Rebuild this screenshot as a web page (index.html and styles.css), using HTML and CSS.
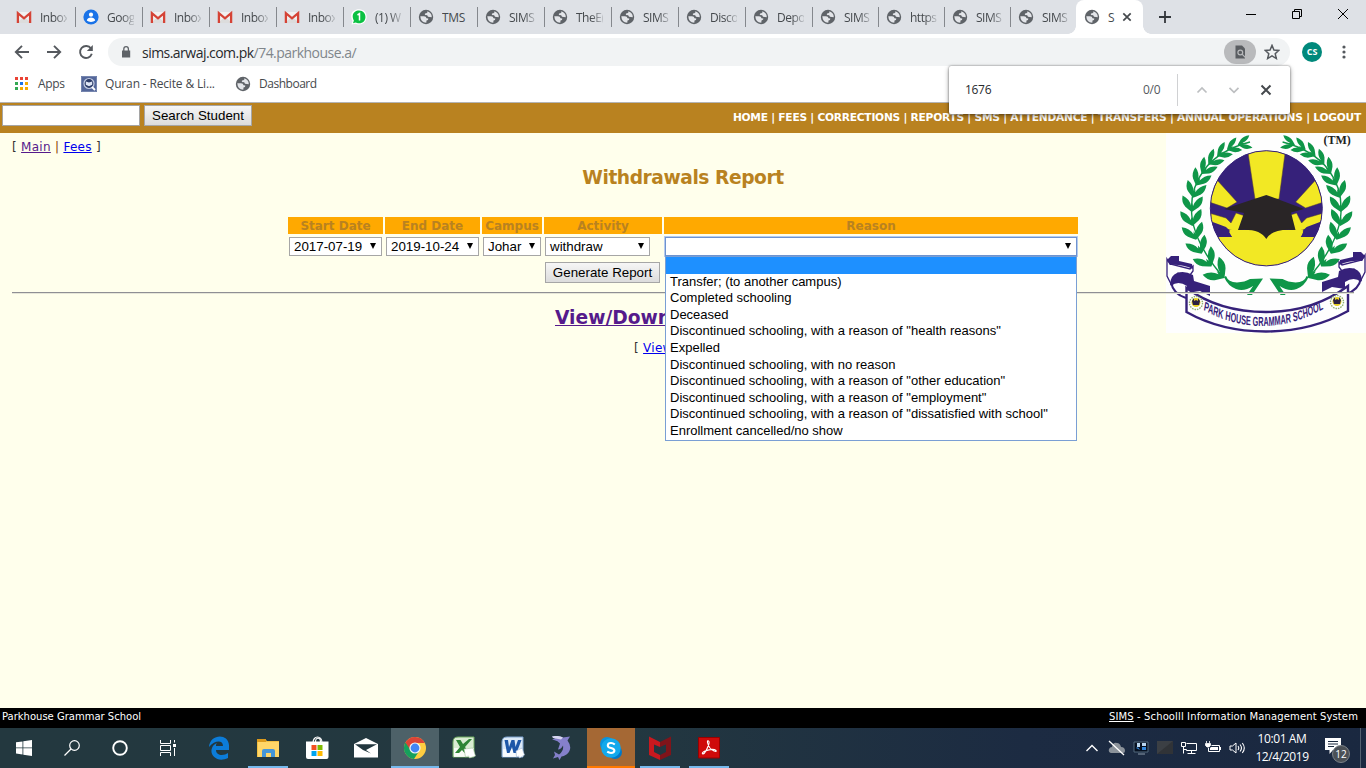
FILE: index.html
```html
<!DOCTYPE html>
<html lang="en">
<head>
<meta charset="utf-8">
<title>SIMS</title>
<link rel="stylesheet" href="styles.css">
</head>
<body>
<svg class="defs" width="0" height="0">
  <symbol id="globe" viewBox="0 0 16 16"><circle cx="8" cy="8" r="7.200" fill="#5f6368"/><path d="M2.300 7.300 6 7.200Q8.300 7.300 8.500 9.300L10.300 9.400Q10.600 11.300 8.500 11.400L8.300 13.700Q2.600 13.500 2.300 7.300zM9.300 2.300Q10 3.800 8.300 4.200 6.500 4.200 6.800 5.600 7 6.300 9 6.100L10 7.700 13.800 8.200Q13.800 3.700 9.300 2.300z" fill="#e3e5e9"/></symbol>
  <symbol id="gmail" viewBox="0 0 16 16"><path d="M1 3h14v11H1z" fill="#f1f1f1"/><path d="M1 14 8 7.500 15 14z" fill="#dcdcdc"/><path d="M1.900 14V4.200L8 9.300l6.100-5.100V14" fill="none" stroke="#d54336" stroke-width="2.300"/></symbol>
  <symbol id="leaf" viewBox="-12 -18 24 24" overflow="visible"><path d="M0 4Q-3 2-7-1Q-11.500-5-10.500-12Q-3-9-1-2L0-5L1-2Q3-9 10.500-12Q11.500-5 7-1Q3 2 0 4z" fill="#0f9648"/></symbol>
</svg>

<header class="tabs">
  <div class="tab"><svg><use href="#gmail"/></svg><span>Inbox</span></div>
  <div class="tab"><svg viewBox="0 0 16 16"><circle cx="8" cy="8" r="7.600" fill="#1a73e8"/><circle cx="8" cy="5.700" r="2.100" fill="#fff"/><path d="M3.800 11.500c.5-4 7.900-4 8.400 0-2 1.900-6.400 1.900-8.400 0z" fill="#fff"/></svg><span>Goog</span></div>
  <div class="tab"><svg><use href="#gmail"/></svg><span>Inbox</span></div>
  <div class="tab"><svg><use href="#gmail"/></svg><span>Inbox</span></div>
  <div class="tab"><svg><use href="#gmail"/></svg><span>Inbox</span></div>
  <div class="tab"><svg viewBox="0 0 16 16"><path d="M.5 15.500 1.500 12C-2.500 4 3 .3 8 .3c10.500 0 10 15.200 0 15.200-1.500 0-2.500-.3-3.500-.8z" fill="#fff"/><path d="M2 14.200 2.900 11.600C-.5 5 4 1.500 8 1.500c8.600 0 8.600 12.800 0 12.800-1.500 0-2.500-.5-3.300-.9z" fill="#0cc143"/><path d="m6.500 6 2-1.300V11.500" stroke="#fff" stroke-width="1.500" fill="none"/></svg><span>(1) W</span></div>
  <div class="tab"><svg><use href="#globe"/></svg><span class="full">TMS</span></div>
  <div class="tab"><svg><use href="#globe"/></svg><span>SIMS</span></div>
  <div class="tab"><svg><use href="#globe"/></svg><span>TheE(</span></div>
  <div class="tab"><svg><use href="#globe"/></svg><span>SIMS</span></div>
  <div class="tab"><svg><use href="#globe"/></svg><span>Disco</span></div>
  <div class="tab"><svg><use href="#globe"/></svg><span>Depo</span></div>
  <div class="tab slim"><svg><use href="#globe"/></svg><span>SIMS</span></div>
  <div class="tab slim"><svg><use href="#globe"/></svg><span>https</span></div>
  <div class="tab slim"><svg><use href="#globe"/></svg><span>SIMS</span></div>
  <div class="tab slim last"><svg><use href="#globe"/></svg><span>SIMS</span></div>
  <div class="tab active"><svg><use href="#globe"/></svg><span>S</span><svg class="x" viewBox="0 0 10 10"><path d="m1.300 1.300 7.400 7.400m0-7.400L1.300 8.700" stroke="#45494d" stroke-width="1.700"/></svg></div>
  <svg class="plus" viewBox="0 0 12 12"><path d="M6 0v12M0 6h12" stroke="#33373b" stroke-width="1.800"/></svg>
  <div class="winctl">
    <svg viewBox="0 0 12 12"><path d="M1 6.500h10" stroke="#000"/></svg>
    <svg viewBox="0 0 12 12"><path d="M1.500 3.500h7v7h-7zM3.500 3.500v-2h7v7h-2" fill="none" stroke="#000"/></svg>
    <svg viewBox="0 0 12 12"><path d="m1 1 10 10M11 1 1 11" stroke="#000"/></svg>
  </div>
</header>

<div class="toolbar">
  <svg class="nv" viewBox="0 0 16 16"><path d="M15 8H2M8 1.800 1.800 8 8 14.200" fill="none" stroke="#55595e" stroke-width="1.900"/></svg>
  <svg class="nv" viewBox="0 0 16 16"><path d="M1 8h13M8 1.800 14.200 8 8 14.200" fill="none" stroke="#55595e" stroke-width="1.900"/></svg>
  <svg class="nv" viewBox="0 0 16 16"><path d="M13 4.500A6 6 0 1 0 13.800 9.800" fill="none" stroke="#55595e" stroke-width="1.900"/><path d="M14.800 1v6h-6z" fill="#55595e"/></svg>
  <div class="omni">
    <svg class="lock" viewBox="0 0 10 12"><path d="M1 4.500h8.200V11.500H1z" fill="#5f6368"/><path d="M2.800 5V3a2.300 2.300 0 0 1 4.600 0v2" fill="none" stroke="#5f6368" stroke-width="1.300"/></svg>
    <span class="url">sims.arwaj.com.pk<i>/74.parkhouse.a/</i></span>
    <span class="findpill"><svg viewBox="0 0 12 14"><path d="M1.500.5H8L11 3.500V13.500H1.500z" fill="#5a5d61"/><circle cx="6.300" cy="7.500" r="2.400" fill="none" stroke="#b9babc" stroke-width="1.200"/><path d="m8 9.200 3.500 3.500" stroke="#b9babc" stroke-width="1.200"/></svg></span>
    <svg class="star" viewBox="0 0 14 14"><path d="m7 1.200 1.700 4 4.300.4-3.200 2.900 1 4.200L7 10.400l-3.800 2.300 1-4.200L1 5.600l4.300-.4z" fill="none" stroke="#55595e" stroke-width="1.300"/></svg>
  </div>
  <span class="avatar">CS</span>
  <svg class="dots" viewBox="0 0 4 14"><circle cx="2" cy="2" r="1.600"/><circle cx="2" cy="7" r="1.600"/><circle cx="2" cy="12" r="1.600"/></svg>
</div>

<div class="bookmarks">
  <svg class="apps" viewBox="0 0 13 13"><path d="M0 0h3v3H0zM5 0h3v3H5zM10 0h3v3h-3z" fill="#ea4335"/><path d="M0 5h3v3H0zM0 10h3v3H0z" fill="#34a853"/><path d="M5 5h3v3H5z" fill="#1a73e8"/><path d="M10 5h3v3h-3zM5 10h3v3H5zM10 10h3v3h-3z" fill="#f5ab00"/></svg>
  <span class="b1">Apps</span>
  <svg class="bi" viewBox="0 0 16 16"><path d="M0 0h16v16H0z" fill="#54679a"/><path d="M.5.5h15v15H.5z" fill="none" stroke="#7585ae"/><circle cx="8" cy="7.500" r="5" fill="#2c3c68" stroke="#c4cde2" stroke-width="1.200"/><path d="m4.800 5.500 3.200 1 3.200-1v3.200L8 10.300 4.800 8.700z" fill="#dfe6f5"/><path d="m11 11 3 3" stroke="#fff" stroke-width="1.800"/></svg>
  <span class="b2">Quran - Recite &amp; Li...</span>
  <svg class="bi"><use href="#globe"/></svg>
  <span class="b3">Dashboard</span>
</div>

<div class="findbar"><span>1676</span><span class="count">0/0</span><i></i>
  <svg viewBox="0 0 12 12"><path d="m1.500 8.500 4.500-4.500 4.500 4.500" fill="none" stroke="#bdbfc1" stroke-width="1.700"/></svg>
  <svg viewBox="0 0 12 12"><path d="m1.500 3.800 4.500 4.500 4.500-4.500" fill="none" stroke="#bdbfc1" stroke-width="1.700"/></svg>
  <svg viewBox="0 0 12 12"><path d="m1.500 1.500 9 9m0-9-9 9" stroke="#45494d" stroke-width="2"/></svg>
</div>

<nav class="sitenav">
  <span class="field"></span><span class="btn search">Search Student</span>
  <span class="links">HOME | FEES | CORRECTIONS | REPORTS | SMS | ATTENDANCE | TRANSFERS | ANNUAL OPERATIONS | LOGOUT</span>
</nav>

<main class="page">
  <svg class="logo" viewBox="0 0 200 200">
    <path d="M0 0h200v200H0z" fill="#fefefe"/>
    <clipPath id="disc"><ellipse cx="100.300" cy="75.300" rx="56" ry="57.600"/></clipPath>
    <g clip-path="url(#disc)">
      <path d="M40 10h120v130H40z" fill="#36217a"/>
      <g fill="#f2e824" stroke="#57442c" stroke-width=".5">
        <path d="M81 13H120L113 66H89z"/>
        <path d="M51 47 71 69 61 75 43 69zM149.600 47 129.600 69 139.600 75 157.600 69z"/>
        <path d="M43 80 60 85 65 90 70 80 79 83 72 99 64 97 44 91zM157.600 80 140.600 85 135.600 90 130.600 80 121.600 83 128.600 99 136.600 97 156.600 91z"/>
        <path d="M40 103 66 104 62 97H138L135 104 160 103V140H40z" stroke="none"/>
      </g>
      <path d="M44 88 60 94 64 98 62 100 66 104 48 104zM156.600 88 140.600 94 136.600 98 138.600 100 134.600 104 152.600 104z" fill="#36217a"/>
    </g>
    <ellipse cx="100.300" cy="75.300" rx="56" ry="57.600" fill="none" stroke="#36217a" stroke-width="1"/>
    <path d="M58 76 100.300 62 138 76 125 79.500 129.500 97Q106 95 100.300 106Q94 95 72 97L78 80z" fill="#292526"/>
    <g id="branch">
      <path d="M84 9Q53 17 38 37T26 84T57 144" fill="none" stroke="#0f9648" stroke-width="1.400"/>
      <use href="#leaf" x="-12" y="-18" width="24" height="24" transform="translate(75 11) rotate(76) scale(.62 .85)"/>
      <use href="#leaf" x="-12" y="-18" width="24" height="24" transform="translate(64 15) rotate(65) scale(.66 .85)"/>
      <use href="#leaf" x="-12" y="-18" width="24" height="24" transform="translate(54 21) rotate(56) scale(.7 .88)"/>
      <use href="#leaf" x="-12" y="-18" width="24" height="24" transform="translate(45 29) rotate(47) scale(.75 .92)"/>
      <use href="#leaf" x="-12" y="-18" width="24" height="24" transform="translate(38 38) rotate(37) scale(.8 .96)"/>
      <use href="#leaf" x="-12" y="-18" width="24" height="24" transform="translate(32 49) rotate(27) scale(.86 1)"/>
      <use href="#leaf" x="-12" y="-18" width="24" height="24" transform="translate(28 61) rotate(15) scale(.92 1)"/>
      <use href="#leaf" x="-12" y="-18" width="24" height="24" transform="translate(26 75) rotate(3) scale(.96 1)"/>
      <use href="#leaf" x="-12" y="-18" width="24" height="24" transform="translate(26 89) rotate(-6)"/>
      <use href="#leaf" x="-12" y="-18" width="24" height="24" transform="translate(29 103) rotate(-15)"/>
      <use href="#leaf" x="-12" y="-18" width="24" height="24" transform="translate(34 117) rotate(-25)"/>
      <use href="#leaf" x="-12" y="-18" width="24" height="24" transform="translate(43 130) rotate(-35) scale(1.050)"/>
      <use href="#leaf" x="-12" y="-18" width="24" height="24" transform="translate(55 142) rotate(-48) scale(1.150)"/>
      <path d="M60 143Q62 149 71 149.500Q79 149 84 146L97 145.500 86 162H81L87 153Q78 159 70 156Q62 153 58 144z" fill="#0f9648"/>
    </g>
    <use href="#branch" transform="translate(200.600 0) scale(-1 1)"/>
    <g id="fold">
      <path d="M5 149Q7 161 20 165" fill="none" stroke="#36217a" stroke-width="2"/>
      <path d="M1 126 4 131 24 136 27 133V138L24 142V146L12 140 5 151 1 143z" fill="#fefefe" stroke="#36217a" stroke-width="1.300"/>
      <path d="M1 127 5 123 13 123 13 128 26 131 27 136Q15 131 4 132zM4 151Q5 142 11 140Q18 137 27 142L28 148 44 153V163L34 158 21 160V153Q12 147 5 153z" fill="#36217a"/>
    </g>
    <use href="#fold" transform="translate(200 -4) scale(-1 1)"/>
    <path d="M20.500 155Q53 179 100 179T182 153V178Q145 198.500 100 198.500T20.500 179z" fill="#fefefe" stroke="#36217a" stroke-width="2.400"/>
    <g id="mini"><circle cx="30" cy="170" r="6.500" fill="#fff" stroke="#8fae6e" stroke-width="1.400" stroke-dasharray="1.500 1"/><circle cx="30" cy="169.500" r="4.500" fill="#e5cf25"/><path d="M26 168l2-3v3l2-1 2 1v-3l2 3-1 4h-6z" fill="#2b2040"/></g>
    <use href="#mini" x="141" y="-1"/>
    <path id="arc" d="M67 177Q178 211 290 173" fill="none"/>
    <g transform="scale(.56 1)"><text class="motto"><textPath href="#arc">PARK HOUSE GRAMMAR SCHOOL</textPath></text></g>
    <text class="tm" x="157.500" y="11">(TM)</text>
  </svg>

  <div class="crumbs">[ <a class="seen">Main</a> <b>|</b> <a>Fees</a> ]</div>
  <h1>Withdrawals Report</h1>

  <div class="grid">
    <div class="th">Start Date</div><div class="th">End Date</div><div class="th">Campus</div><div class="th">Activity</div><div class="th">Reason</div>
    <div class="sel">2017-07-19<i></i></div>
    <div class="sel">2019-10-24<i></i></div>
    <div class="sel">Johar<i></i></div>
    <div class="sel act">withdraw<i></i></div>
    <div class="sel open"><i></i>
      <ul class="menu">
        <li class="hi"></li>
        <li>Transfer; (to another campus)</li>
        <li>Completed schooling</li>
        <li>Deceased</li>
        <li>Discontinued schooling, with a reason of "health reasons"</li>
        <li>Expelled</li>
        <li>Discontinued schooling, with no reason</li>
        <li>Discontinued schooling, with a reason of "other education"</li>
        <li>Discontinued schooling, with a reason of "employment"</li>
        <li>Discontinued schooling, with a reason of "dissatisfied with school"</li>
        <li>Enrollment cancelled/no show</li>
      </ul>
    </div>
    <span class="btn gen">Generate Report</span>
  </div>
  <hr>
  <h2><a class="seen">View/Down</a></h2>
  <div class="viewrow">[ <a>View</a></div>
</main>

<footer class="foot"><span>Parkhouse Grammar School</span><span class="sys"><u>SIMS</u> - Schoolll Information Management System</span></footer>

<div class="taskbar">
  <div class="ti"><svg viewBox="0 0 16 16"><path d="M0 2.300 6.500 1.400V7.500H0zM7.300 1.300 16 0v7.500H7.300zM0 8.300h6.500v6.200L0 13.600zM7.300 8.300H16V16L7.300 14.700z" fill="#fff"/></svg></div>
  <div class="ti"><svg viewBox="0 0 16 16"><circle cx="10.500" cy="5.500" r="4.800" fill="none" stroke="#fff" stroke-width="1.200"/><path d="M7 9 .5 15.500" stroke="#fff" stroke-width="1.300"/></svg></div>
  <div class="ti"><svg viewBox="0 0 16 16"><circle cx="8" cy="8" r="6.800" fill="none" stroke="#fff" stroke-width="1.900"/></svg></div>
  <div class="ti"><svg viewBox="0 0 16 16"><path d="M.5 0v3.500h10V0M.5 16v-3.500h10V16M.5 5.500h10v5H.5zM14.500 0v2.500M14.500 8v8" fill="none" stroke="#fff"/><path d="M13 4h3v3h-3z" fill="#fff"/></svg></div>
  <div class="sp"></div>
  <div class="ti big"><svg viewBox="0 0 24 24"><path d="M2 11C3-2 21-3 22 9v5H9c0 6 8 6 12 3v5C11 27 2 20 5 12c1-3 3-4 5-5-1 1-1 2-1 3h7C16 4 8 4 2 11z" fill="#0c7cd8"/></svg></div>
  <div class="ti big run"><svg viewBox="0 0 24 24"><path d="M1 3h8l2 2h12v16H1z" fill="#f2bf42"/><path d="M1 3h9v3H1z" fill="#dc9a1c"/><path d="M2 6h21v15H2z" fill="#ffd668"/><path d="M6 21v-6q0-2 2-2h9q2 0 2 2v6h-4v-4h-5v4z" fill="#4596d8"/></svg></div>
  <div class="ti big"><svg viewBox="0 0 24 24"><path d="M8 7C8-1 17-1 17 7M10.500 6c0-5 5-5 5 0" fill="none" stroke="#fff" stroke-width="1.200"/><path d="M1 5.500h22.500V21q0 2-2 2H3q-2 0-2-2z" fill="#fff"/><path d="M6.500 9h5v5h-5z" fill="#f25022"/><path d="M12.500 9h5v5h-5z" fill="#7fba00"/><path d="M6.500 15h5v5h-5z" fill="#00a4ef"/><path d="M12.500 15h5v5h-5z" fill="#ffb900"/></svg></div>
  <div class="ti big"><svg viewBox="0 0 24 24"><path d="M0 8 12 2 24 8V21.500H0z" fill="#fff"/><path d="M1 8.300h22L12 14l5 3.500L9 14z" fill="#23373f"/></svg></div>
  <div class="ti big cur"><svg viewBox="0 0 24 24"><circle cx="12" cy="12" r="11" fill="#ffcd40"/><path d="M12 12 2.400 6.500A11 11 0 0 0 11 23l5.500-8.500z" fill="#16a05d"/><path d="M12 7h9.800A11 11 0 0 0 2.400 6.500L7.500 14z" fill="#db4437"/><circle cx="12" cy="12" r="5.600" fill="#f3f3f3"/><circle cx="12" cy="12" r="4.400" fill="#4285f4"/></svg></div>
  <div class="ti big"><svg viewBox="0 0 24 24"><path d="M6 1h16v20H1V6q0-5 5-5z" fill="#d9ecd2" stroke="#6faa60"/><path d="M2 12h20v9H2z" fill="#fff" opacity=".8"/><path d="M4 4h4.500L11 8l6-5h3l-7 8 4 6h-4.500L10 14l-3 3H3l5-6z" fill="#2d8534"/><path d="m12 13 9-1 2.500 8-6 2-1-2-3 1z" fill="#fff" stroke="#9dbf97" stroke-width=".6"/></svg></div>
  <div class="ti big"><svg viewBox="0 0 24 24"><path d="M6 1h16v20H1V6q0-5 5-5z" fill="#dce9f7" stroke="#7ea3d0"/><path d="M2 13h20v8H2z" fill="#fff" opacity=".8"/><path d="M3.500 4h3.500l1 7 2.500-7h3l1 7 2.500-7h3.500l-5 13h-3l-1.500-6-2.500 6H6z" fill="#1e57a8"/><path d="m15 15 6-3 2.500 7-5 3-1-2-2 1z" fill="#fff" stroke="#9cb3d1" stroke-width=".6"/></svg></div>
  <div class="ti big"><svg viewBox="0 0 24 24"><path d="M2 .5q6-1.500 11 1l7-1-2.500 4q6 8-1 14-3 2-5 2l-2 3.500-1.500-3-5 1.500 2-3.500-1-3.500 5 3q5-4 4-9-2 4-5 4l2-6q-2-3-6-3.500L2 3.500l3-1z" fill="#8580cb"/><path d="M2 .5q6-1.500 11 1l-2 2-8-1.500z" fill="#d8d7f0"/></svg></div>
  <div class="ti big alert"><svg viewBox="0 0 24 24"><circle cx="8" cy="8" r="7" fill="#0a93dc"/><circle cx="16" cy="16" r="7" fill="#0078c8"/><circle cx="12" cy="12" r="9.800" fill="#12a9ec"/><path d="M15.800 8.500Q14 7 12 7 8.800 7 8.800 9.400 8.800 11.300 12 12t3.400 2.600Q15.400 17 12 17 10 17 8.200 15.700" fill="none" stroke="#fff" stroke-width="2.100"/></svg></div>
  <div class="ti big run"><svg viewBox="0 0 24 24"><path d="m1 .5 11 5.500v5L6 8.500V16l6 3v5L1 19z" fill="#c8191f"/><path d="M23 .5 12 6v5l6-2.500V16l-6 3v5l11-5z" fill="#80141a"/></svg></div>
  <div class="ti big run"><svg viewBox="0 0 24 24"><path d="M1.500 1.500h21v20.500h-21z" fill="#cf0a0a" stroke="#990000"/><path d="M11.500 5q-1.300-1-1 1.500Q12 13 17 15q3 1 2-.5-3-2.500-11 .5-4 2-2 3Q9 17 12 7.500q.5-2-.5-2.500z" fill="none" stroke="#fff" stroke-width="1.100"/></svg></div>
  <div class="tray">
    <svg class="t1" viewBox="0 0 14 14"><path d="m1.500 10 5.500-5.500 5.500 5.500" fill="none" stroke="#fff" stroke-width="1.400"/></svg>
    <svg class="t2" viewBox="0 0 18 16"><path d="M3 13q-3-1-2-4 1-2 3-2Q5 2 9 3q3 0 4 4 4 0 4 4 0 2-2 2z" fill="#8b929a"/><path d="m1 1 15 14" stroke="#fff" stroke-width="1.300"/></svg>
    <svg class="t3" viewBox="0 0 16 16"><path d="M1 2h14v10H1z" fill="#061020" stroke="#53687c"/><path d="M4 3h3v4H4zM9 3h4v3H9z" fill="#b9d5ef"/><path d="M3 8q2-2 4 2zM9 7h4v3H9z" fill="#2f83d8"/><path d="M5 14h7" stroke="#8d9bab"/></svg>
    <svg class="t4" viewBox="0 0 16 16"><path d="M0 1h16v13H0z" fill="#303337"/><path d="M0 1h16L0 14z" fill="#3b3f44"/></svg>
    <svg class="t5" viewBox="0 0 16 16"><path d="M5.500 3.500h10v7h-10M.5 2.500h4v4h-4zM2.500 6.500v7M2.500 9.500h3v1M10.500 10.500v3M6.500 13.500h8" fill="none" stroke="#fff"/></svg>
    <svg class="t6" viewBox="0 0 16 16"><path d="M6.500 5.500h8v6h-11V8" fill="none" stroke="#fff"/><path d="M6 7h7v3H5V8zM15 7h1v3h-1z" fill="#fff"/><path d="M.5 3.500h5v2L4 7H2L.5 5.500zM1.500 1v2M4.500 1v2" fill="#fff" stroke="#fff" stroke-width=".8"/></svg>
    <svg class="t7" viewBox="0 0 17 14"><path d="M1 5h2.500L7 2v10L3.500 9H1z" fill="none" stroke="#fff"/><path d="M9 5q1.500 2 0 4M11 3.500q3 3.500 0 7M13.300 2q4 5 0 10" fill="none" stroke="#fff" stroke-width="1.100"/></svg>
    <div class="clock"><span>10:01 AM</span><span>12/4/2019</span></div>
    <div class="note"><svg viewBox="0 0 16 16"><path d="M0 0h16v12H8l-3.500 4V12H0z" fill="#fff"/><path d="M3 3.500h10M3 6h10M3 8.500h6" stroke="#1c2a3f"/></svg><b>12</b></div>
    <i class="edge"></i>
  </div>
</div>
</body>
</html>
```
FILE: styles.css
```css
* { box-sizing: border-box; }
body { margin: 0; width: 1366px; height: 768px; overflow: hidden; display: flex; flex-direction: column; position: relative; background: #ffffec; font-family: "DejaVu Sans", sans-serif; }
svg { display: block; flex: none; }
.defs { position: absolute; }

.tabs { height: 34px; flex: none; background: #dee1e6; display: flex; padding-left: 9px; font: 12px "Open Sans", sans-serif; color: #45494d; }
.tab { width: 67px; height: 34px; flex: none; display: flex; align-items: center; padding-left: 7px; position: relative; }
.tab::after { content: ""; position: absolute; right: 0; top: 7px; width: 1px; height: 20px; background: #85888d; }
.tab svg { width: 16px; height: 16px; }
.tab span { width: 27px; margin-left: 8px; overflow: hidden; white-space: nowrap; -webkit-mask-image: linear-gradient(90deg, #000 55%, transparent 110%); letter-spacing: -.5px; }
.tab .full { -webkit-mask-image: none; letter-spacing: -.3px; }
.slim { width: 66px; }
.last { width: 65px; }
.last::after { display: none; }
.active { background: #fff; border-radius: 8px 8px 0 0; }
.active::after, .active::before { content: ""; position: absolute; width: 8px; height: 8px; top: 26px; right: -8px; background: radial-gradient(circle at 100% 0, transparent 7.5px, #fff 8px); }
.active::before { left: -8px; right: auto; background: radial-gradient(circle at 0 0, transparent 7.5px, #fff 8px); }
.tab.active { padding-left: 8px; }
.active span { width: 10px; -webkit-mask-image: none; }
.tab .x { width: 10px; height: 10px; margin-left: 4px; }
.plus { width: 12px; height: 12px; margin: 11px 0 0 16px; }
.winctl { display: flex; gap: 34px; margin: 8px 17px 0 auto; }
.winctl svg { width: 12px; height: 12px; }

.toolbar { height: 36px; flex: none; background: #fff; display: flex; align-items: center; padding-left: 14px; }
.nv { width: 16px; height: 16px; margin-right: 16px; }
.omni { width: 1182px; height: 28px; margin-left: -2px; border-radius: 14px; background: #f1f3f4; display: flex; align-items: center; padding-left: 13px; }
.lock { width: 10px; height: 12px; }
.url { margin-left: 11px; font: 14px "Open Sans", sans-serif; color: #27292c; letter-spacing: -.53px; }
.url i { font-style: normal; color: #80868b; }
.findpill { width: 32px; height: 24px; border-radius: 12px; background: #b9babc; margin-left: auto; display: flex; align-items: center; justify-content: center; }
.findpill svg { width: 12px; height: 14px; }
.star { width: 16px; height: 16px; margin: 0 10px 0 8px; }
.avatar { width: 20px; height: 20px; border-radius: 50%; background: #00897b; color: #fff; font: bold 9px/20px "Open Sans", sans-serif; text-align: center; margin-left: 12px; }
.dots { width: 4px; height: 14px; fill: #55595e; margin-left: 20px; }

.bookmarks { height: 33px; flex: none; background: #fff; border-bottom: 1px solid #b4b4b4; display: flex; align-items: center; padding: 0 0 5px 15px; font: 12px "Open Sans", sans-serif; color: #45494d; }
.apps { width: 13px; height: 13px; }
.bi { width: 16px; height: 16px; }
.b1 { width: 43px; margin-left: 10px; letter-spacing: -.3px; }
.b2 { width: 130px; margin-left: 8px; white-space: nowrap; letter-spacing: -.16px; }
.b3 { margin-left: 8px; letter-spacing: -.48px; }

.findbar { position: absolute; left: 949px; top: 66px; width: 341px; height: 48px; background: #fff; border-radius: 2px; box-shadow: 0 0 2px rgba(0,0,0,.5), 0 2px 5px rgba(0,0,0,.4); display: flex; align-items: center; padding-left: 16px; font: 12px "Open Sans", sans-serif; letter-spacing: -.3px; color: #27292c; z-index: 5; }
.findbar .count { width: 34px; margin-left: auto; color: #55595e; }
.findbar i { width: 1px; height: 32px; background: #d0d1d3; }
.findbar svg { width: 12px; height: 12px; margin-left: 20px; }
.findbar svg:nth-of-type(1) { margin-left: 18px; }
.findbar span { margin-top: -2px; }
.findbar svg:last-child { margin-right: 18px; }

.sitenav { height: 30px; flex: none; background: #b98220; display: flex; align-items: flex-start; padding: 2px 5px 0 2px; }
.field { width: 138px; height: 21px; background: #fff; border: 1px solid #a5a5a5; }
.btn { font: 13.333px "Liberation Sans", Arial, sans-serif; color: #000; background: linear-gradient(#f6f6f6, #dcdcdc); border: 1px solid #a6a6a6; height: 21px; line-height: 19px; text-align: center; white-space: nowrap; }
.search { width: 108px; margin-left: 4px; }
.links { margin-left: auto; color: #fff; font-size: 10.67px; font-weight: bold; letter-spacing: -.245px; line-height: 13px; margin-top: 6px; white-space: nowrap; }

.page { height: 575px; flex: none; position: relative; font-size: 12px; color: #333; }
.logo { position: absolute; left: 1166px; top: 0; width: 200px; height: 200px; }
.motto { font: bold 13px "Liberation Sans", Arial, sans-serif; fill: #36217a; }
.tm { font: bold 12px "Liberation Serif", serif; fill: #222; }
a { color: #0000ee; text-decoration: underline; }
a.seen { color: #551a8b; }
.crumbs { height: 27px; line-height: 28px; padding-left: 12px; white-space: pre; letter-spacing: .28px; }
.crumbs b { font-weight: normal; color: #884400; }
h1 { margin: 6px 0 0; height: 24px; font-size: 18.67px; line-height: 24px; text-align: center; color: #b98220; letter-spacing: -.45px; }
.grid { width: 790px; margin: 27px auto 0; display: grid; grid-template-columns: 95px 95px 60px 118px 414px; grid-template-rows: 17px 21px 21px; gap: 2px; font-size: 12px; }
.th { background: #ffa900; color: #b98220; font-weight: bold; line-height: 18px; text-align: center; white-space: nowrap; }
.sel { font: 13.333px/17px "Liberation Sans", Arial, sans-serif; color: #000; height: 19px; margin: 1px 1px 0; background: #fff; border: 1px solid #a6a6a6; padding-left: 4px; position: relative; white-space: nowrap; }
.sel > i { position: absolute; right: 5px; top: 5px; border: 3.500px solid transparent; border-top: 6px solid #000; border-bottom: 0; }
.act { width: 105px; }
.open { border-color: #6e93cf; box-shadow: 0 0 0 1px #b5cbee; }
.menu { position: absolute; left: -1px; top: 18px; width: 412px; height: 185px; margin: 0; padding: 0; list-style: none; background: #fff; border: 1px solid #7a9fd4; font-size: 13px; z-index: 3; }
.menu li { height: 16.6px; line-height: 16px; padding-left: 4px; }
.menu .hi { background: #1e90ff; }
.gen { grid-column: 4; width: 115px; margin: 3px 0 0 1px; }
hr { margin: 12px 12px 0; border: 0; height: 2px; border-top: 1px solid #8f8f94; border-bottom: 1px solid #e6e6d8; position: relative; }
h2 { margin: 12px 0 0 555px; font-size: 18.67px; line-height: 24px; }
.viewrow { margin: 9px 0 0 634px; line-height: 18px; letter-spacing: .28px; }

.foot { height: 20px; flex: none; background: #000; color: #fff; display: flex; justify-content: space-between; font-size: 10px; line-height: 17px; padding: 0 8px 0 2px; }
.sys { letter-spacing: .12px; }

.taskbar { height: 40px; flex: none; background: linear-gradient(90deg, #23383f 0, #233840 45%, #1c2b42 75%, #1a2840); display: flex; gap: 1px; }
.ti { width: 48px; height: 40px; flex: none; display: flex; align-items: center; justify-content: center; margin-right: -1px; position: relative; }
.ti svg { width: 16px; height: 16px; }
.sp { width: 2px; flex: none; }
.big { margin-right: 0; }
.ti.big svg { width: 24px; height: 24px; }
.run::after, .cur::after { content: ""; position: absolute; left: 4px; right: 4px; bottom: 0; height: 2px; background: #76b9ed; }
.cur { background: #4d6168; }
.cur::after { left: 0; right: 0; }
.alert { background: #a56834; border-bottom: 2px solid #ff7800; }
.alert svg { margin-top: 2px; }
.tray { margin-left: auto; display: flex; align-items: center; color: #fff; font: 12px "Open Sans", sans-serif; }
.t1 { width: 14px; height: 14px; margin-right: 9px; }
.t2 { width: 18px; height: 16px; margin-right: 7px; }
.t3, .t4, .t5, .t6 { width: 16px; height: 16px; margin-right: 8px; }
.t7 { width: 17px; height: 14px; margin-right: 9px; }
.clock { width: 54px; display: flex; flex-direction: column; align-items: center; line-height: 18px; letter-spacing: -.4px; white-space: nowrap; }
.note { width: 26px; height: 24px; margin: 2px 9px 0 16px; position: relative; }
.note svg { width: 16px; height: 16px; margin-top: 1px; }
.note b { position: absolute; left: 7px; top: 8px; width: 18px; height: 18px; border-radius: 50%; background: #4b5056; border: 1px solid #7c8288; font: 10px/16px "Open Sans", sans-serif; text-align: center; }
.edge { width: 1px; height: 40px; background: #536070; margin-right: 4px; }
.tray { padding-right: 1px; }
```
